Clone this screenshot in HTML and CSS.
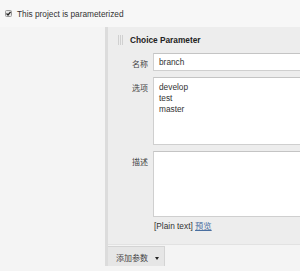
FILE: index.html
```html
<!DOCTYPE html>
<html lang="zh-CN">
<head>
    <meta charset="UTF-8">
    <title>Parameterized build</title>
    <link rel="stylesheet" href="styles.css">
</head>
<body>
<div class="option">
    <span class="check">
        <svg viewBox="0 0 7 7" width="7" height="7">
            <rect x="0.5" y="0.5" width="6" height="6" rx="1" fill="#e8e8e8" stroke="#999"/>
            <path d="M1.5 3.6 L3 5 L5.6 1.8" fill="none" stroke="#222" stroke-width="1.3"/>
        </svg>
    </span>
    <span>This project is parameterized</span>
</div>

<div class="params">
    <div class="gutter"></div>
    <div class="block">
        <div class="panel">
            <div class="panel-head">
                <span class="handle"></span>
                <span class="title">Choice Parameter</span>
            </div>
            <div class="row">
                <label class="label">名称</label>
                <div class="field"><div class="input">branch</div></div>
            </div>
            <div class="row">
                <label class="label">选项</label>
                <div class="field"><div class="textarea choices">develop<br>test<br>master</div></div>
            </div>
            <div class="row">
                <label class="label">描述</label>
                <div class="field">
                    <div class="textarea desc"></div>
                    <div class="hint">[Plain text] <a href="#">预览</a></div>
                </div>
            </div>
        </div>
        <div class="actions">
            <button class="add-btn">添加参数 <span class="caret"></span></button>
        </div>
    </div>
</div>
</body>
</html>
```

FILE: styles.css
```css
body {
    margin: 0;
    background: #f4f4f4;
    font-family: "Liberation Sans", Arial, "Noto Sans CJK SC", sans-serif;
    font-size: 8.3px;
    color: #333;
    overflow: hidden;
}

.option {
    height: 27px;
    display: flex;
    align-items: center;
    gap: 5px;
    padding-left: 5px;
    background: #f7f7f7;
}

.check {
    display: flex;
}

.params {
    display: flex;
}

.gutter {
    width: 105px;
    flex: none;
}

.block {
    flex: 1;
    min-width: 0;
    border-left: 3px solid #dcdcdc;
    height: 239px;
}

/* Parameter panel */
.panel {
    background: #ededed;
    border-bottom: 1px solid #e2e2e2;
    padding: 8px 0 13px;
}

.panel-head {
    display: flex;
    align-items: center;
    height: 10px;
    padding-left: 10px;
    margin-bottom: 8px;
}

.handle {
    width: 6px;
    height: 10px;
    margin-right: 6px;
    background: repeating-linear-gradient(90deg, #d0d0d0 0 1px, transparent 1px 2px);
}

.title {
    font-weight: bold;
    color: #222;
}

.row {
    display: flex;
    margin-bottom: 6px;
}

.row:last-child {
    margin-bottom: 0;
}

.label {
    width: 45px;
    flex: none;
    text-align: right;
    padding-right: 5px;
    box-sizing: border-box;
    padding-top: 5px;
    color: #444;
    font-size: 8px;
}

.field {
    flex: 1;
    min-width: 0;
}

/* the fields run on past the right edge of the view */
.input,
.textarea {
    background: #fff;
    border: 1px solid #cfcfcf;
    border-top-color: #c4c4c4;
    border-right: none;
    box-sizing: border-box;
    padding: 0 5px;
}

.input {
    height: 18px;
    line-height: 16px;
}

.textarea {
    padding-top: 4px;
    line-height: 11px;
}

.choices {
    height: 68px;
}

.desc {
    height: 66px;
}

.hint {
    margin-top: 4px;
    line-height: 10px;
    padding-left: 1px;
}

.hint a {
    color: #4a6fa0;
}

/* Add parameter button */
.actions {
    background: #f4f4f4;
    padding-top: 1px;
}

.add-btn {
    font: inherit;
    font-size: 8px;
    color: #444;
    background: #e6e6e6;
    border: 1px solid #d4d4d4;
    border-left: none;
    height: 22px;
    width: 57px;
    padding: 0 0 0 8px;
    text-align: left;
}

.caret {
    display: inline-block;
    margin-left: 5px;
    border-left: 2.5px solid transparent;
    border-right: 2.5px solid transparent;
    border-top: 3px solid #222;
    vertical-align: middle;
}
```
